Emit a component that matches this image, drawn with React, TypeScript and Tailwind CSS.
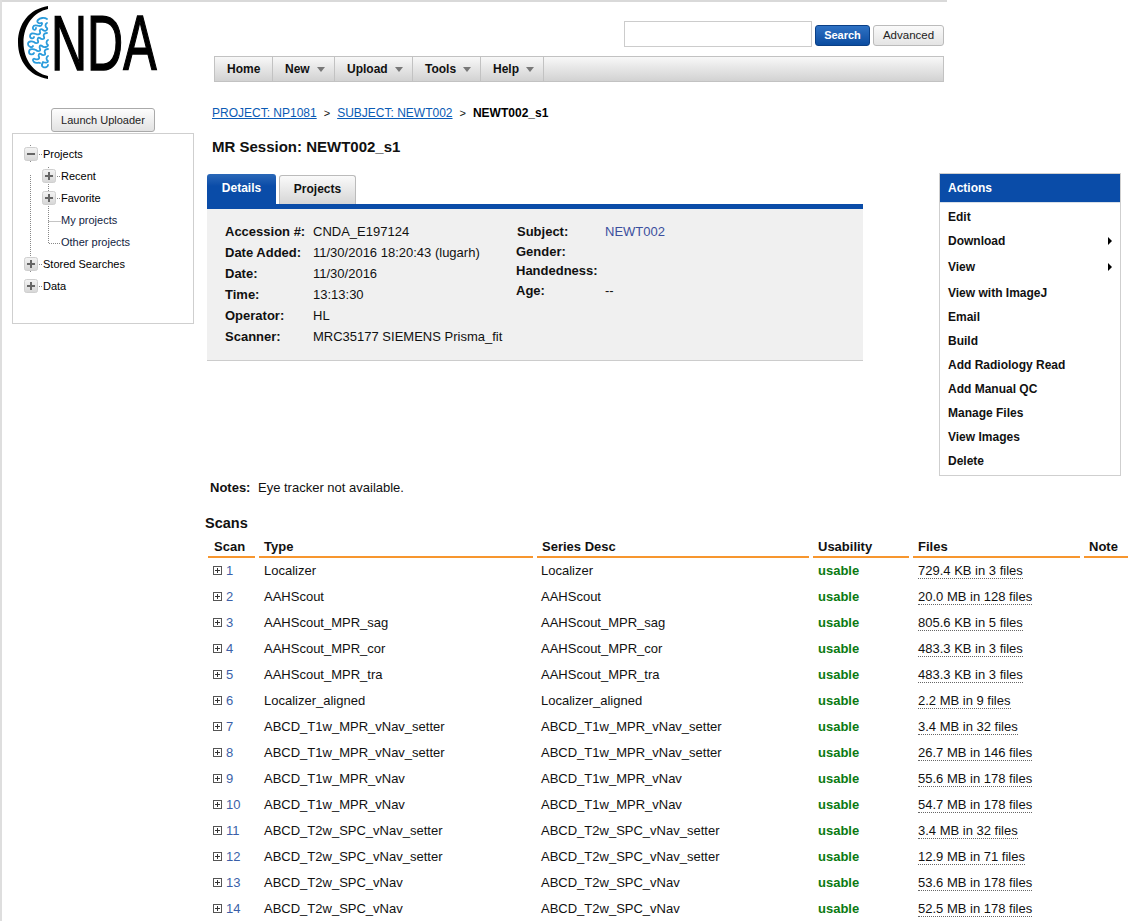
import React from 'react';

const font = "font-['Liberation_Sans',Arial,sans-serif]";

type Scan = { id: number; type: string; files: string };

const scans: Scan[] = [
  { id: 1, type: 'Localizer', files: '729.4 KB in 3 files' },
  { id: 2, type: 'AAHScout', files: '20.0 MB in 128 files' },
  { id: 3, type: 'AAHScout_MPR_sag', files: '805.6 KB in 5 files' },
  { id: 4, type: 'AAHScout_MPR_cor', files: '483.3 KB in 3 files' },
  { id: 5, type: 'AAHScout_MPR_tra', files: '483.3 KB in 3 files' },
  { id: 6, type: 'Localizer_aligned', files: '2.2 MB in 9 files' },
  { id: 7, type: 'ABCD_T1w_MPR_vNav_setter', files: '3.4 MB in 32 files' },
  { id: 8, type: 'ABCD_T1w_MPR_vNav_setter', files: '26.7 MB in 146 files' },
  { id: 9, type: 'ABCD_T1w_MPR_vNav', files: '55.6 MB in 178 files' },
  { id: 10, type: 'ABCD_T1w_MPR_vNav', files: '54.7 MB in 178 files' },
  { id: 11, type: 'ABCD_T2w_SPC_vNav_setter', files: '3.4 MB in 32 files' },
  { id: 12, type: 'ABCD_T2w_SPC_vNav_setter', files: '12.9 MB in 71 files' },
  { id: 13, type: 'ABCD_T2w_SPC_vNav', files: '53.6 MB in 178 files' },
  { id: 14, type: 'ABCD_T2w_SPC_vNav', files: '52.5 MB in 178 files' },
];

const details = [
  ['Accession #:', 'CNDA_E197124'],
  ['Date Added:', '11/30/2016 18:20:43 (lugarh)'],
  ['Date:', '11/30/2016'],
  ['Time:', '13:13:30'],
  ['Operator:', 'HL'],
  ['Scanner:', 'MRC35177 SIEMENS Prisma_fit'],
];

const actions = [
  { label: 'Edit' },
  { label: 'Download', more: true },
  { label: 'View', more: true },
  { label: 'View with ImageJ' },
  { label: 'Email' },
  { label: 'Build' },
  { label: 'Add Radiology Read' },
  { label: 'Add Manual QC' },
  { label: 'Manage Files' },
  { label: 'View Images' },
  { label: 'Delete' },
];

const navItems = [
  { label: 'Home', w: 'w-[58px]', menu: false },
  { label: 'New', w: 'w-[62px]', menu: true },
  { label: 'Upload', w: 'w-[78px]', menu: true },
  { label: 'Tools', w: 'w-[68px]', menu: true },
  { label: 'Help', w: 'w-[63px]', menu: true },
];

function Logo() {
  return (
    <div className="relative h-[80px] w-[160px]">
      <svg className="absolute left-0 top-0" width="60" height="84" viewBox="0 0 60 84">
        <path d="M46 4C27 7 16 22 16 40.5C16 59 27 74 46 77L46 74C32 71 21.5 58 21.5 40.5C21.5 23 32 10 46 7Z" fill="#000" />
        {/* brain: winding folds inside a half ellipse */}
        <g fill="none" stroke="#2b9cdc" strokeWidth="1.8" strokeLinecap="round" strokeLinejoin="round">
          <path d="M45 17C42 15 38 16 36 18C34 20 37 22 39 21C41 20 40 24 38 24C35 24 32 22 31 25C30 28 34 29 34 26" />
          <path d="M45 21C43 22 43 25 45 26C46 28 43 30 41 28C39 26 37 28 38 30C39 32 36 33 34 32C31 31 28 31 28 34C28 37 32 37 32 35" />
          <path d="M45 31C42 31 41 33 42 35C43 37 40 38 38 36C36 35 35 37 36 39C37 41 34 42 32 40C30 39 26 39 26 42C26 45 30 46 31 44" />
          <path d="M46 38C44 39 44 42 46 43C46 45 42 46 40 44C38 42 37 45 38 47C39 49 36 50 34 48C32 47 27 46 27 50C27 53 31 53 32 51" />
          <path d="M46 47C43 47 42 49 43 51C44 53 41 54 39 52C37 51 36 53 37 55C38 57 35 58 33 57C31 56 30 58 32 60C34 62 37 60 38 61" />
          <path d="M46 54C44 55 44 58 46 59C46 61 43 61 41 60C40 62 39 64 41 65C43 66 46 65 46 63" />
        </g>
      </svg>
      <div className="absolute left-[49px] top-[17px] h-[48px] scale-y-[1.56] whitespace-nowrap text-[50px] leading-[48px] text-black [-webkit-text-stroke:1px_#000]">NDA</div>
    </div>
  );
}

function Caret() {
  return <span className="ml-[7px] inline-block h-0 w-0 border-x-[4.5px] border-t-[5px] border-x-transparent border-t-[#777]" />;
}

function TreeToggle({ open }: { open?: boolean }) {
  return (
    <svg width="14" height="14" viewBox="0 0 14 14" className="shrink-0">
      <defs>
        <linearGradient id="toggle" x1="0" y1="0" x2="0" y2="1">
          <stop offset="0" stopColor="#f4f4f4" />
          <stop offset="1" stopColor="#d6d6d6" />
        </linearGradient>
      </defs>
      <rect x="0.5" y="0.5" width="13" height="13" rx="2" fill="url(#toggle)" stroke="#cfcfcf" />
      <rect x="3" y="6" width="8" height="2" fill="#666" />
      {!open && <rect x="6" y="3" width="2" height="8" fill="#666" />}
    </svg>
  );
}

function TreeNode({ label, pl, open, leaf, color }: { label: string; pl: string; open?: boolean; leaf?: boolean; color?: string }) {
  return (
    <div className={`flex h-[22px] items-center ${pl}`}>
      {leaf ? <span className="w-[19px] shrink-0" /> : <TreeToggle open={open} />}
      {!leaf && <span className="w-[5px] shrink-0" />}
      <span className={`text-[11px] ${color ?? 'text-black'}`}>{label}</span>
    </div>
  );
}

function Tree() {
  return (
    <div className="relative h-[191px] border border-[#cfcfcf] bg-white pl-[11px] pt-[9px]">
      {/* dotted guide lines */}
      <svg className="absolute left-0 top-0" width="60" height="160" fill="none" stroke="#888" strokeDasharray="1 1">
        <path d="M17.5 11V28M17.5 41V138M17.5 151V158M24 20.5H29M24 130.5H29M24 152.5H29" />
        <path d="M35.5 33V36M35.5 50V58M35.5 72V109.5H48M35.5 87.5H48M42 42.5H47M42 64.5H47" />
      </svg>
      <div className="relative">
        <TreeNode label="Projects" pl="pl-0" open />
        <TreeNode label="Recent" pl="pl-[18px]" />
        <TreeNode label="Favorite" pl="pl-[18px]" />
        <TreeNode label="My projects" pl="pl-[18px]" leaf color="text-[#12233f]" />
        <TreeNode label="Other projects" pl="pl-[18px]" leaf color="text-[#12233f]" />
        <TreeNode label="Stored Searches" pl="pl-0" />
        <TreeNode label="Data" pl="pl-0" />
      </div>
    </div>
  );
}

function Actions() {
  return (
    <div className="mt-[67px] h-[303px] w-[182px] shrink-0 border border-[#cfcfcf] bg-white">
      <div className="flex h-[28px] items-center bg-[#0a4ca8] pl-[8px] text-[12px] font-bold text-white">Actions</div>
      <div className="h-[1px] bg-[#d8dfe8]" />
      <div className="pt-[2px]">
        {actions.map((a) => (
          <div key={a.label} className={`flex h-[24px] items-center justify-between pl-[8px] pr-[8px] text-[12px] font-bold text-[#111] ${a.more ? 'mb-[2px]' : ''}`}>
            <span>{a.label}</span>
            {a.more && <span className="h-0 w-0 border-y-[4px] border-l-[4px] border-y-transparent border-l-black" />}
          </div>
        ))}
      </div>
    </div>
  );
}

function ScanToggle() {
  return (
    <svg width="9" height="9" viewBox="0 0 9 9" className="mb-px shrink-0">
      <rect x="0.5" y="0.5" width="8" height="8" fill="#fff" stroke="#555" />
      <path d="M2 4.5H7M4.5 2V7" stroke="#333" />
    </svg>
  );
}

export default function App() {
  const headers = ['Scan', 'Type', 'Series Desc', 'Usability', 'Files', 'Note'];
  return (
    <div className={`h-[921px] w-[1135px] overflow-hidden border-l-2 border-[#dedede] bg-white text-[13px] text-[#111] ${font}`}>
      <div className="h-[2px] w-[945px] bg-[#d9d9d9]" />

      <div className="flex h-[104px]">
        <div className="w-[212px] shrink-0">
          <Logo />
        </div>
        <div className="w-[730px] shrink-0">
          <div className="flex items-start justify-end gap-[3px] pt-[19px]">
            <input className="h-[26px] w-[188px] border border-[#ccc] bg-white" />
            <button className="mt-[4px] h-[21px] w-[55px] rounded-[3px] border border-[#0a3f86] bg-gradient-to-b from-[#2f72c4] to-[#0a4ca0] text-[11px] font-bold text-white">
              Search
            </button>
            <button className="mt-[4px] h-[21px] w-[71px] rounded-[3px] border border-[#bbb] bg-gradient-to-b from-[#fafafa] to-[#e4e4e4] text-[11.5px] text-[#222]">
              Advanced
            </button>
          </div>
          <div className="mt-[9px] flex h-[26px] border border-[#c2c2c2] bg-gradient-to-b from-[#f8f8f8] to-[#d2d2d2]">
            {navItems.map((n) => (
              <div key={n.label} className={`flex items-center border-r border-[#c2c2c2] pl-[12px] text-[12px] font-bold text-[#111] ${n.w}`}>
                {n.label}
                {n.menu && <Caret />}
              </div>
            ))}
          </div>
        </div>
      </div>

      <div className="flex h-[370px]">
        <div className="ml-[10px] w-[182px] shrink-0 pt-[2px]">
          <div className="mx-auto flex h-[24px] w-[104px] items-center justify-center rounded-[3px] border border-[#aaa] bg-gradient-to-b from-[#fdfdfd] to-[#e2e2e2] text-[11px] text-[#222]">
            Launch Uploader
          </div>
          <div className="mt-px">
            <Tree />
          </div>
        </div>

        <div className="ml-[13px] w-[656px] shrink-0">
          <div className="flex h-[14px] items-center pl-[5px] text-[12px]">
            <a className="text-[#0a5bb5] underline">PROJECT: NP1081</a>
            <span className="mx-[7px] text-[11px]">&gt;</span>
            <a className="text-[#0a5bb5] underline">SUBJECT: NEWT002</a>
            <span className="mx-[7px] text-[11px]">&gt;</span>
            <span className="font-bold text-black">NEWT002_s1</span>
          </div>
          <div className="mt-[18px] h-[18px] pl-[5px] text-[15px] font-bold leading-[18px] text-[#111]">MR Session: NEWT002_s1</div>

          <div className="mt-[18px] flex h-[30px] items-end gap-[3px]">
            <div className="flex h-[30px] w-[69px] items-center justify-center rounded-t-[3px] bg-gradient-to-b from-[#2a68b8] to-[#0a4ca8] to-40% pb-[2px] text-[12px] font-bold text-white">
              Details
            </div>
            <div className="flex h-[29px] w-[77px] items-center justify-center rounded-t-[3px] border border-b-0 border-[#bbb] bg-gradient-to-b from-[#fafafa] to-[#d6d6d6] pb-[2px] text-[12px] font-bold text-[#111]">
              Projects
            </div>
          </div>
          <div className="h-[5px] bg-[#0a4ca8]" />
          <div className="flex h-[152px] border-b border-[#ccc] bg-[#f0f0f0] pl-[18px] pt-[12px]">
            <div className="w-[292px]">
              {details.map(([k, v]) => (
                <div key={k} className="flex h-[21px] items-center">
                  <span className="w-[88px] font-bold">{k}</span>
                  <span>{v}</span>
                </div>
              ))}
            </div>
            <div className="pt-[1px]">
              <div className="flex h-[20px] items-center">
                <span className="w-[88px] font-bold">Subject:</span>
                <a className="text-[#3b4f9e]">NEWT002</a>
              </div>
              <div className="-ml-px flex h-[19px] items-center font-bold">Gender:</div>
              <div className="-ml-px flex h-[20px] items-center font-bold">Handedness:</div>
              <div className="-ml-px flex h-[20px] items-center">
                <span className="w-[89px] font-bold">Age:</span>
                <span>--</span>
              </div>
            </div>
          </div>
        </div>

        <div className="ml-[76px]">
          <Actions />
        </div>
      </div>

      <div className="ml-[208px] mt-[4px] flex h-[16px] items-center">
        <span className="w-[48px] font-bold">Notes:</span>
        <span>Eye tracker not available.</span>
      </div>

      <div className="ml-[203px] mt-[18px] h-[18px] text-[14.5px] font-bold leading-[18px]">Scans</div>

      <div className="ml-[206px] mt-[6px] w-[920px]">
        <div className="grid grid-cols-[47px_274px_272px_96px_167px_44px] gap-x-[4px]">
          {headers.map((h, i) => (
            <div key={h} className={`flex h-[20px] items-center border-b-2 border-[#f7962e] font-bold text-[#111] ${i === 0 ? 'pl-[6px]' : 'pl-[5px]'}`}>
              {h}
            </div>
          ))}
          {scans.map((s) => (
            <React.Fragment key={s.id}>
              <div className="flex h-[26px] items-center gap-[4px] pl-[5px] text-[#3b5fa8]">
                <ScanToggle />
                {s.id}
              </div>
              <div className="flex h-[26px] items-center pl-[5px]">{s.type}</div>
              <div className="flex h-[26px] items-center pl-[4px]">{s.type}</div>
              <div className="flex h-[26px] items-center pl-[5px] font-bold text-[#0b7a12]">usable</div>
              <div className="flex h-[26px] items-center pl-[5px]">
                <span className="border-b border-dotted border-[#666] leading-[14px]">{s.files}</span>
              </div>
              <div className="h-[26px]" />
            </React.Fragment>
          ))}
        </div>
      </div>
    </div>
  );
}
